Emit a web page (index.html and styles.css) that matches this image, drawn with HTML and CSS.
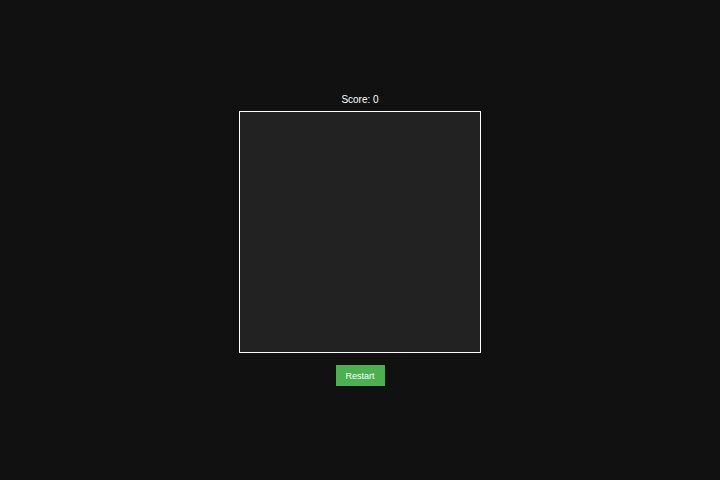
FILE: index.html
```html
<!DOCTYPE html>
<html>
<head>
<meta charset="utf-8">
<link rel="stylesheet" href="styles.css">
</head>
<body>
<div class="game">
  <div class="score">Score: 0</div>
  <div class="board"></div>
  <button class="restart">Restart</button>
</div>
</body>
</html>
```
FILE: styles.css
```css
html, body {
  margin: 0;
  padding: 0;
  height: 100%;
  background: #111111;
}
body {
  display: flex;
  align-items: center;
  justify-content: center;
  font-family: "Liberation Sans", Arial, sans-serif;
  color: #ffffff;
}
.game {
  display: flex;
  flex-direction: column;
  align-items: center;
}
.score {
  font-size: 10px;
  line-height: 12px;
  margin-bottom: 5px;
}
.board {
  width: 240px;
  height: 240px;
  background: #222222;
  border: 1px solid #ffffff;
}
.restart {
  margin-top: 12px;
  width: 49px;
  height: 21px;
  padding: 0;
  border: none;
  background: #4caf50;
  color: #ffffff;
  font-family: "Liberation Sans", Arial, sans-serif;
  font-size: 9px;
}
```
